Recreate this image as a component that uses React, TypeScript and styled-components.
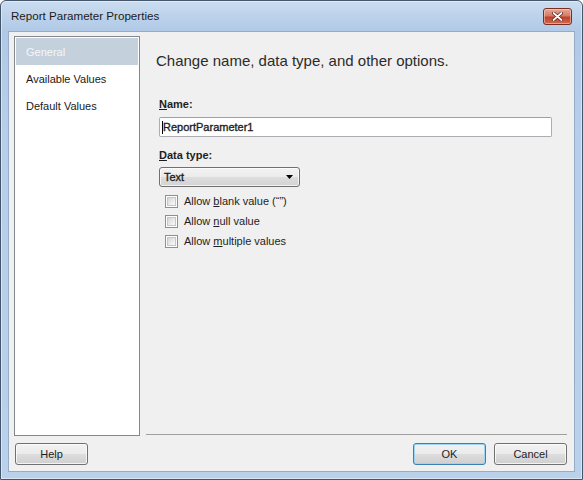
import React from "react";
import styled, { createGlobalStyle } from "styled-components";

const Global = createGlobalStyle`
  html, body { margin: 0; padding: 0; background: #ffffff; }
  body { font-family: "Liberation Sans", Arial, sans-serif; }
  * { box-sizing: border-box; }
`;

const Window = styled.div`
  width: 583px;
  height: 480px;
  border: 1px solid #43566c;
  border-radius: 6px 6px 0 0;
  background: linear-gradient(180deg, #cadcf0 0px, #b0c9e6 30px, #b6cee9 120px, #b9d1ea 100%);
  display: flex;
  flex-direction: column;
  padding: 0 7px 7px 7px;
  box-shadow: inset 0 0 0 1px rgba(255, 255, 255, 0.45);
`;

const TitleBar = styled.div`
  height: 30px;
  display: flex;
  align-items: center;
  justify-content: space-between;
  padding: 0 3px 2px 3px;
`;

const Title = styled.span`
  font-size: 11.6px;
  color: #1b1b1b;
`;

const CloseButton = styled.div`
  width: 29px;
  height: 17px;
  margin-top: 3px;
  border: 1px solid #7a2d22;
  border-radius: 3px;
  background: linear-gradient(180deg, #e8a898 0%, #d57b68 45%, #c1412b 55%, #cf6a4e 100%);
  box-shadow: inset 0 0 0 1px rgba(255, 220, 210, 0.5);
  display: flex;
  align-items: center;
  justify-content: center;
`;

const Client = styled.div`
  flex: 1;
  background: #f0f0f0;
  border: 1px solid #95abc6;
  display: flex;
  flex-direction: column;
  padding: 4px 7px 0 5px;
`;

const Body = styled.div`
  display: flex;
  height: 400px;
`;

const Nav = styled.div`
  width: 126px;
  height: 400px;
  background: #ffffff;
  border: 1px solid #828790;
  padding: 1px;
  display: flex;
  flex-direction: column;
`;

const NavItem = styled.div<{ $active?: boolean }>`
  height: 27px;
  display: flex;
  align-items: center;
  padding: 1px 0 0 10px;
  font-size: 11px;
  color: ${(p) => (p.$active ? "#f4f6f8" : "#1a1a1a")};
  background: ${(p) => (p.$active ? "#c4d1dd" : "transparent")};
`;

const Panel = styled.div`
  flex: 1;
  margin-left: 6px;
  height: 399px;
  border-bottom: 1px solid #a0a0a0;
  display: flex;
  flex-direction: column;
  padding: 16px 0 0 10px;
`;

const Heading = styled.div`
  font-size: 15px;
  line-height: 18px;
  color: #2b2b2b;
`;

const Form = styled.div`
  display: flex;
  flex-direction: column;
  padding-left: 3px;
  margin-top: 27px;
`;

const Label = styled.div<{ $gap?: number }>`
  font-size: 11px;
  line-height: 14px;
  font-weight: bold;
  color: #1e1e1e;
  margin-top: ${(p) => p.$gap ?? 0}px;
`;

const Key = styled.span`
  text-decoration: underline;
  text-underline-offset: 1px;
`;

const TextBox = styled.div`
  margin-top: 6px;
  width: 393px;
  height: 20px;
  border: 1px solid #abadb3;
  border-top-color: #9aa0aa;
  border-radius: 2px;
  background: #ffffff;
  display: flex;
  align-items: center;
  padding-left: 2px;
  font-size: 11px;
  color: #1e1e1e;
  -webkit-text-stroke: 0.35px #1e1e1e;
`;

const Caret = styled.span`
  display: inline-block;
  width: 1px;
  height: 13px;
  background: #000000;
`;

const Select = styled.div`
  margin-top: 5px;
  width: 141px;
  height: 20px;
  border: 1px solid #707070;
  border-radius: 3px;
  background: linear-gradient(180deg, #f3f3f3 0%, #ebebeb 48%, #dddddd 52%, #d3d3d3 100%);
  box-shadow: inset 0 0 0 1px rgba(255, 255, 255, 0.7);
  display: flex;
  align-items: center;
  justify-content: space-between;
  padding: 0 6px 0 4px;
  font-size: 11px;
  color: #1e1e1e;
  -webkit-text-stroke: 0.35px #1e1e1e;
`;

const Checks = styled.div`
  display: flex;
  flex-direction: column;
  margin-top: 4px;
  padding-left: 6px;
`;

const CheckRow = styled.label`
  height: 20px;
  display: flex;
  align-items: center;
  gap: 6px;
  font-size: 11px;
  color: #1e1e1e;
`;

const Box = styled.span`
  width: 13px;
  height: 13px;
  border: 1px solid #8e8f8f;
  background: #ffffff;
  padding: 1px;
  display: inline-block;

  &::before {
    content: "";
    display: block;
    width: 100%;
    height: 100%;
    background: linear-gradient(135deg, #d6d6d6 0%, #ececec 60%, #fbfbfb 100%);
    border: 1px solid #c6c6c6;
    box-sizing: border-box;
  }
`;

const Footer = styled.div`
  display: flex;
  align-items: center;
  justify-content: space-between;
  padding: 7px 0 0 1px;
`;

const Buttons = styled.div`
  display: flex;
  gap: 8px;
`;

const Button = styled.button<{ $default?: boolean }>`
  width: 73px;
  height: 22px;
  border: 1px solid ${(p) => (p.$default ? "#3c7fb1" : "#707070")};
  border-radius: 3px;
  background: linear-gradient(180deg, #f2f2f2 0%, #ebebeb 48%, #dddddd 52%, #cfcfcf 100%);
  box-shadow: inset 0 0 0 1px ${(p) => (p.$default ? "#9fd4f3" : "rgba(255,255,255,0.75)")};
  font-family: "Liberation Sans", Arial, sans-serif;
  font-size: 11px;
  color: #1e1e1e;
  padding: 0;
`;

export default function App() {
  return (
    <>
      <Global />
      <Window>
        <TitleBar>
          <Title>Report Parameter Properties</Title>
          <CloseButton>
            <svg width="11" height="9" viewBox="0 0 11 9">
              <path d="M1.5 1 L9.5 8 M9.5 1 L1.5 8" stroke="#5a1a10" strokeWidth="3.2" strokeLinecap="round" />
              <path d="M1.5 1 L9.5 8 M9.5 1 L1.5 8" stroke="#ffffff" strokeWidth="1.8" strokeLinecap="round" />
            </svg>
          </CloseButton>
        </TitleBar>
        <Client>
          <Body>
            <Nav>
              <NavItem $active>General</NavItem>
              <NavItem>Available Values</NavItem>
              <NavItem>Default Values</NavItem>
            </Nav>
            <Panel>
              <Heading>Change name, data type, and other options.</Heading>
              <Form>
                <Label>
                  <Key>N</Key>ame:
                </Label>
                <TextBox>
                  <Caret />
                  ReportParameter1
                </TextBox>
                <Label $gap={11}>
                  <Key>D</Key>ata type:
                </Label>
                <Select>
                  <span>Text</span>
                  <svg width="7" height="4" viewBox="0 0 7 4">
                    <path d="M0 0 H7 L3.5 4 Z" fill="#000000" />
                  </svg>
                </Select>
                <Checks>
                  <CheckRow>
                    <Box />
                    <span>
                      Allow <Key>b</Key>lank value (“”)
                    </span>
                  </CheckRow>
                  <CheckRow>
                    <Box />
                    <span>
                      Allow <Key>n</Key>ull value
                    </span>
                  </CheckRow>
                  <CheckRow>
                    <Box />
                    <span>
                      Allow <Key>m</Key>ultiple values
                    </span>
                  </CheckRow>
                </Checks>
              </Form>
            </Panel>
          </Body>
          <Footer>
            <Button>Help</Button>
            <Buttons>
              <Button $default>OK</Button>
              <Button>Cancel</Button>
            </Buttons>
          </Footer>
        </Client>
      </Window>
    </>
  );
}
